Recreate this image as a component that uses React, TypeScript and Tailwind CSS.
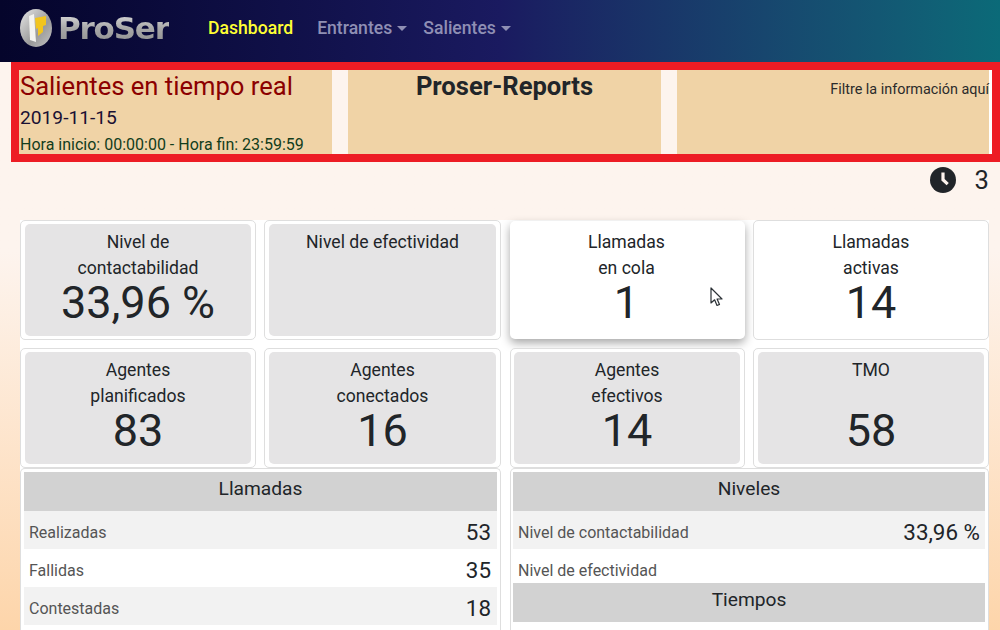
import React from 'react';

const font = { fontFamily: 'Roboto, "Liberation Sans", sans-serif' };

function Caret() {
  return <span className="ml-[5px] inline-block align-[3px] border-x-[5px] border-t-[5px] border-x-transparent border-t-[#8f8fb4]" />;
}

function Logo() {
  return (
    <div className="flex items-center ml-[19px]">
      <svg width="34" height="40" viewBox="0 0 34 40">
        <defs>
          <linearGradient id="ring" x1="0" y1="0" x2="1" y2="1">
            <stop offset="0" stopColor="#e8e8e8" />
            <stop offset="0.6" stopColor="#9a9a9a" />
            <stop offset="1" stopColor="#c4c4c4" />
          </linearGradient>
        </defs>
        <ellipse cx="17" cy="20" rx="16" ry="19" fill="url(#ring)" />
        <path d="M10 8 L15 6 L17 34 L11 32 Z" fill="#f4f4f0" />
        <path d="M16 10 L27 8 L27 17 L24 18 L24 24 L19 28 L19 20 L17 21 Z" fill="#f2c51e" />
      </svg>
      <span className="ml-[5px] text-[31px] leading-[40px] font-bold tracking-[-1.2px] bg-gradient-to-b from-[#f0f0f0] via-[#a8a8a8] to-[#8a8a8a] bg-clip-text text-transparent" style={{ fontFamily: '"DejaVu Sans", sans-serif' }}>
        ProSer
      </span>
    </div>
  );
}

function Navbar() {
  return (
    <nav className="h-[62px] shrink-0 flex items-center pb-[6px] bg-gradient-to-r from-[#05052b] via-[#1a1a60] via-50% to-[#0b6a78]">
      <div className="w-[208px] shrink-0"><Logo /></div>
      <a className="text-[17.6px] font-medium text-[#ffff33]">Dashboard</a>
      <a className="ml-[24px] text-[17.6px] font-medium text-[#8f8fb4]">Entrantes<Caret /></a>
      <a className="ml-[16px] text-[17.6px] font-medium text-[#8f8fb4]">Salientes<Caret /></a>
    </nav>
  );
}

function HeaderBand() {
  return (
    <div className="ml-[11px] h-[100px] shrink-0 border-[8px] border-[#ed1c24] bg-[#fdf4ee] flex gap-[16px]">
      <div className="w-[313px] bg-[#f0d3a6] pl-[1px] overflow-hidden">
        <div className="text-[25.6px] leading-[30px] mt-[1px] text-[#8b0000]">Salientes en tiempo real</div>
        <div className="text-[19.2px] leading-[24px] mt-[5px] text-[#1a1033]">2019-11-15</div>
        <div className="text-[16px] leading-[20px] mt-[5px] text-[#123d1c]">Hora inicio: 00:00:00 - Hora fin: 23:59:59</div>
      </div>
      <div className="w-[313px] bg-[#f0d3a6] text-center">
        <div className="text-[25.6px] leading-[30px] mt-[1px] font-bold text-[#212529]">Proser-Reports</div>
      </div>
      <div className="w-[315px] bg-[#f0d3a6] border-r-[3px] border-white text-right">
        <div className="text-[14.4px] leading-[20px] mt-[10px] text-[#2b2b2b]">Filtre la información aquí</div>
      </div>
    </div>
  );
}

function Clock() {
  return (
    <svg width="26" height="26" viewBox="0 0 26 26">
      <circle cx="13" cy="13" r="13" fill="#212529" />
      <path d="M11.4 5.5 H14.6 V12 L18.8 16 L16.6 18.3 L11.4 13.4 Z" fill="#fdf4ee" />
    </svg>
  );
}

function StatCard({ lines, value, plain, hover, tight }: { lines: string[]; value?: string; plain?: boolean; hover?: boolean; tight?: boolean }) {
  const pad = hover ? 'pl-[3px] pr-[5px]' : tight ? 'pl-[3px] pr-[4px]' : 'px-[4px]';
  return (
    <div className={`relative rounded-[5px] bg-white py-[3px] ${pad} ${hover ? 'h-[118px] my-[1px] shadow-[0_4px_10px_rgba(0,0,0,0.35)]' : 'h-[120px] border border-[#dedede]'}`}>
      <div className={`h-full rounded-[5px] text-center text-[#212529] ${plain ? '' : 'bg-[#e5e4e5]'}`}>
        <div className="text-[17.6px] leading-[26px] pt-[5px] h-[57px]">
          {lines.map((l) => <div key={l}>{l}</div>)}
        </div>
        {value && <div className="text-[45px] leading-[44px]">{value}</div>}
      </div>
      {hover && (
        <svg className="absolute left-[200px] top-[66px]" width="14" height="20" viewBox="0 0 14 20">
          <path d="M1 1 L1 16 L4.6 12.8 L7 18.5 L9.5 17.4 L7.1 12 L12 12 Z" fill="#fff" stroke="#2b3136" strokeWidth="1.2" strokeLinejoin="round" />
        </svg>
      )}
    </div>
  );
}

function Row({ label, value, odd, h, wide }: { label: string; value?: string; odd?: boolean; h?: string; wide?: boolean }) {
  return (
    <div className={`flex items-start justify-between pl-[5px] ${wide ? 'pr-[5px]' : 'pr-[6px]'} ${h ?? 'h-[38px]'} ${odd ? 'bg-[#f2f2f2]' : 'bg-white'}`}>
      <span className="mt-[10px] text-[16px] leading-[24px] text-[#555555]">{label}</span>
      {value && <span className="mt-[6px] text-[22.4px] leading-[30px] text-[#212529]">{value}</span>}
    </div>
  );
}

function SectionHead({ title }: { title: string }) {
  return <div className="h-[39px] shrink-0 flex items-center justify-center pb-[4px] bg-[#d2d2d2] text-[19.2px] text-[#212529]">{title}</div>;
}

export default function App() {
  return (
    <div className="w-[1000px] h-[630px] overflow-hidden flex flex-col bg-gradient-to-b from-[#fdf4ee] from-40% to-[#fdd5aa]" style={font}>
      <Navbar />
      <HeaderBand />
      <div className="h-[58px] shrink-0 flex justify-end items-start pt-[5px] pr-[11px]">
        <Clock />
        <span className="ml-[19px] text-[25.6px] leading-[26px] text-[#212529]">3</span>
      </div>
      <div className="flex-1 ml-[20px] w-[969px] flex gap-[9px] bg-white">
        <div className="w-[481px] shrink-0 flex flex-col">
          <div className="grid grid-cols-[236px_237px] gap-[8px]">
            <StatCard lines={['Nivel de', 'contactabilidad']} value="33,96 %" />
            <StatCard lines={['Nivel de efectividad']} />
            <StatCard lines={['Agentes', 'planificados']} value="83" />
            <StatCard lines={['Agentes', 'conectados']} value="16" />
          </div>
          <div className="flex-1 rounded-t-[5px] border border-b-0 border-[#dedede] bg-white px-[3px] pt-[3px]">
            <SectionHead title="Llamadas" />
            <Row label="Realizadas" value="53" odd />
            <Row label="Fallidas" value="35" />
            <Row label="Contestadas" value="18" odd />
          </div>
        </div>
        <div className="w-[479px] shrink-0 flex flex-col">
          <div className="grid grid-cols-[235px_236px] gap-[8px]">
            <StatCard lines={['Llamadas', 'en cola']} value="1" plain hover />
            <StatCard lines={['Llamadas', 'activas']} value="14" plain />
            <StatCard lines={['Agentes', 'efectivos']} value="14" tight />
            <StatCard lines={['TMO']} value="58" />
          </div>
          <div className="flex-1 rounded-t-[5px] border border-b-0 border-[#dedede] bg-white pl-[2px] pr-[3px] pt-[3px]">
            <SectionHead title="Niveles" />
            <Row label="Nivel de contactabilidad" value="33,96 %" odd wide />
            <Row label="Nivel de efectividad" h="h-[34px]" />
            <SectionHead title="Tiempos" />
          </div>
        </div>
      </div>
    </div>
  );
}
